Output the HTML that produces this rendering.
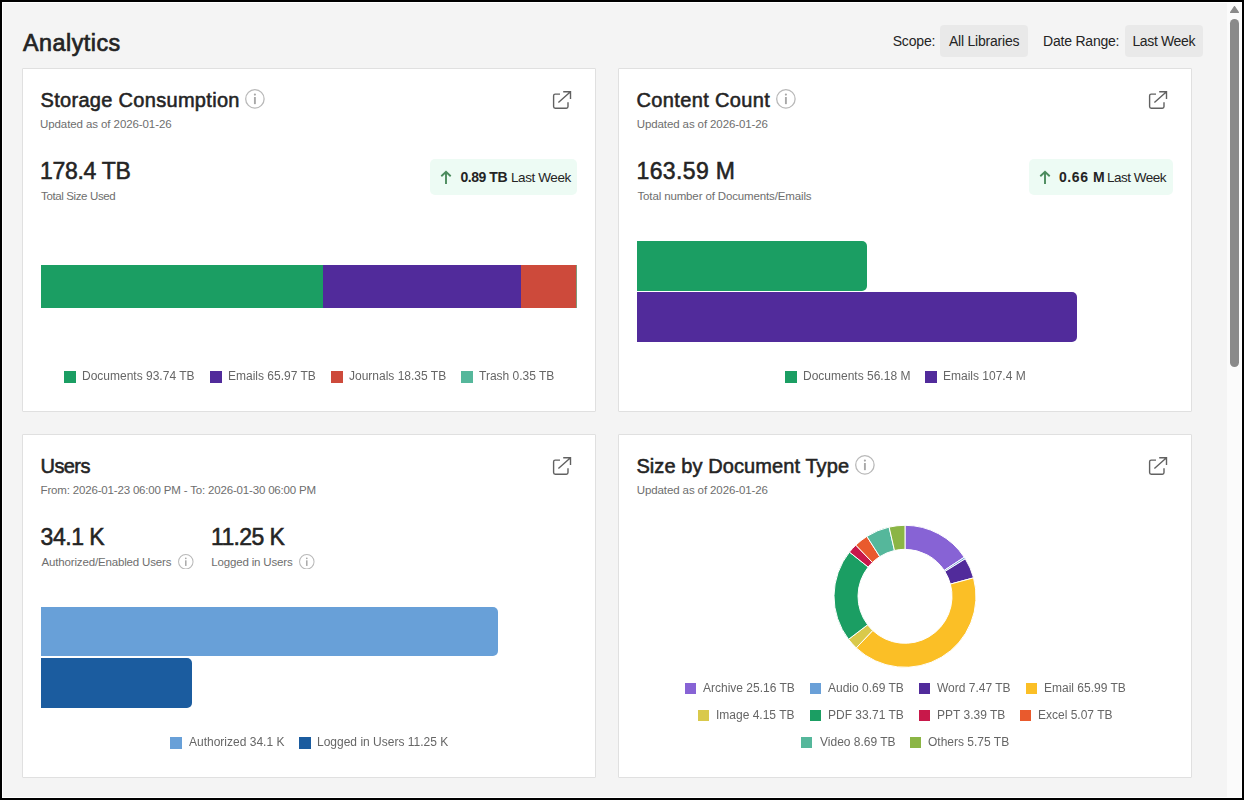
<!DOCTYPE html><html><head><meta charset="utf-8"><style>
html,body{margin:0;padding:0;}
body{width:1244px;height:800px;overflow:hidden;position:relative;background:#f4f4f4;font-family:"Liberation Sans",sans-serif;}
.t{position:absolute;line-height:1;white-space:nowrap;}
.r{position:absolute;}
.card{position:absolute;background:#fff;border:1px solid #e0e0e0;border-radius:1px;box-sizing:border-box;}
</style></head><body>
<div class="r" style="left:0;top:0;width:1244px;height:800px;box-sizing:border-box;border:2px solid #000;"></div>
<div class="r" style="left:2px;top:2px;width:1240px;height:796px;box-sizing:border-box;border:1px solid #fff;"></div>
<div class="r" style="left:1227px;top:3px;width:14px;height:794px;background:#fbfbfb;"></div>
<svg class="r" style="left:1227px;top:3px;width:14px;height:14px" viewBox="0 0 14 14"><path d="M3.6 9.4L7.5 3.6L11.4 9.4Z" fill="#8a8a8a" stroke="#8a8a8a" stroke-width="1.2" stroke-linejoin="round"/></svg>
<div class="r" style="left:1230px;top:19px;width:9px;height:348px;background:#8a8a8a;border-radius:4.5px;"></div>
<div class="t" style="left:23.00px;top:32.00px;font-size:23.3px;color:#242424;letter-spacing:0.5px;-webkit-text-stroke:0.7px #242424;">Analytics</div>
<div class="t" style="left:892.70px;top:34.00px;font-size:14px;color:#242424;letter-spacing:-0.16px;">Scope:</div>
<div class="r" style="left:940px;top:25px;width:88px;height:31.6px;background:#e9e9e9;border-radius:4px;"></div>
<div class="t" style="left:948.90px;top:34.00px;font-size:14px;color:#242424;letter-spacing:-0.208px;">All Libraries</div>
<div class="t" style="left:1043.00px;top:34.00px;font-size:14px;color:#242424;letter-spacing:-0.21px;">Date Range:</div>
<div class="r" style="left:1125px;top:25px;width:78px;height:31.6px;background:#e9e9e9;border-radius:4px;"></div>
<div class="t" style="left:1132.40px;top:34.00px;font-size:14px;color:#242424;letter-spacing:-0.35px;">Last Week</div>
<div class="card" style="left:22px;top:68px;width:574px;height:344px"></div>
<div class="card" style="left:618px;top:68px;width:574px;height:344px"></div>
<div class="card" style="left:22px;top:434px;width:574px;height:344px"></div>
<div class="card" style="left:618px;top:434px;width:574px;height:344px"></div>
<div class="t" style="left:40.50px;top:90.00px;font-size:20px;color:#242424;letter-spacing:0.306px;-webkit-text-stroke:0.55px #242424;">Storage Consumption</div>
<svg class="r" style="left:245.20px;top:89.10px;width:19.8px;height:19.8px" viewBox="0 0 20 20"><circle cx="10" cy="10" r="9.3" fill="none" stroke="#b9b9b9" stroke-width="1.3"/><rect x="9.05" y="8.1" width="1.9" height="7.2" fill="#a8a8a8"/><circle cx="10" cy="5.6" r="1.1" fill="#a8a8a8"/></svg>
<svg class="r" style="left:552px;top:90px;width:20px;height:20px" viewBox="0 0 20 20"><path d="M8 4.1H3.2Q1.6 4.1 1.6 5.7V16.6Q1.6 18.2 3.2 18.2H14.4Q16 18.2 16 16.6V12.2" fill="none" stroke="#616161" stroke-width="1.4" stroke-linecap="butt"/><path d="M11.2 1.7H18.5V8.9M18.5 1.7L6.4 12.6" fill="none" stroke="#616161" stroke-width="1.4"/></svg>
<div class="t" style="left:40.00px;top:119.00px;font-size:11.5px;color:#6e6e6e;letter-spacing:-0.087px;">Updated as of 2026-01-26</div>
<div class="t" style="left:40.00px;top:160.00px;font-size:23px;color:#242424;letter-spacing:-0.286px;-webkit-text-stroke:0.55px #242424;">178.4 TB</div>
<div class="t" style="left:41.00px;top:191.00px;font-size:11.5px;color:#6e6e6e;letter-spacing:-0.372px;">Total Size Used</div>
<div class="r" style="left:430px;top:159px;width:147px;height:36px;background:#edfbf4;border-radius:5px;"></div>
<svg class="r" style="left:439px;top:169px;width:14px;height:17px" viewBox="0 0 14 17"><path d="M7 3V15M2.3 7.3L7 2.8L11.7 7.3" fill="none" stroke="#4b8b5d" stroke-width="1.9"/></svg>
<div class="t" style="left:460.40px;top:170.00px;font-size:14px;font-weight:700;color:#242424;letter-spacing:-0.433px;">0.89 TB</div>
<div class="t" style="left:511.00px;top:171.00px;font-size:13.5px;color:#242424;letter-spacing:-0.4px;">Last Week</div>
<div class="r" style="left:41px;top:265px;width:282px;height:43px;background:#1b9e63;"></div>
<div class="r" style="left:323px;top:265px;width:198px;height:43px;background:#512b9b;"></div>
<div class="r" style="left:521px;top:265px;width:55px;height:43px;background:#cd4a3b;"></div>
<div class="r" style="left:576px;top:265px;width:1px;height:43px;background:#7f9a7a;"></div>
<div class="r" style="left:63.5px;top:371px;width:12.0px;height:12px;background:#1b9e63;"></div>
<div class="t" style="left:82.20px;top:370.04px;font-size:12px;color:#666666;will-change:transform;">Documents 93.74 TB</div>
<div class="r" style="left:209.5px;top:371px;width:12.0px;height:12px;background:#512b9b;"></div>
<div class="t" style="left:227.80px;top:370.04px;font-size:12px;color:#666666;will-change:transform;">Emails 65.97 TB</div>
<div class="r" style="left:330.5px;top:371px;width:12.0px;height:12px;background:#cd4a3b;"></div>
<div class="t" style="left:348.70px;top:370.04px;font-size:12px;color:#666666;will-change:transform;">Journals 18.35 TB</div>
<div class="r" style="left:461px;top:371px;width:12px;height:12px;background:#55b79b;"></div>
<div class="t" style="left:479.30px;top:370.04px;font-size:12px;color:#666666;will-change:transform;">Trash 0.35 TB</div>
<div class="t" style="left:636.50px;top:90.00px;font-size:20px;color:#242424;letter-spacing:0.358px;-webkit-text-stroke:0.55px #242424;">Content Count</div>
<svg class="r" style="left:776.20px;top:89.10px;width:19.8px;height:19.8px" viewBox="0 0 20 20"><circle cx="10" cy="10" r="9.3" fill="none" stroke="#b9b9b9" stroke-width="1.3"/><rect x="9.05" y="8.1" width="1.9" height="7.2" fill="#a8a8a8"/><circle cx="10" cy="5.6" r="1.1" fill="#a8a8a8"/></svg>
<svg class="r" style="left:1148px;top:90px;width:20px;height:20px" viewBox="0 0 20 20"><path d="M8 4.1H3.2Q1.6 4.1 1.6 5.7V16.6Q1.6 18.2 3.2 18.2H14.4Q16 18.2 16 16.6V12.2" fill="none" stroke="#616161" stroke-width="1.4" stroke-linecap="butt"/><path d="M11.2 1.7H18.5V8.9M18.5 1.7L6.4 12.6" fill="none" stroke="#616161" stroke-width="1.4"/></svg>
<div class="t" style="left:636.80px;top:119.00px;font-size:11.5px;color:#6e6e6e;letter-spacing:-0.109px;">Updated as of 2026-01-26</div>
<div class="t" style="left:636.50px;top:160.00px;font-size:23px;color:#242424;letter-spacing:0.372px;-webkit-text-stroke:0.55px #242424;">163.59 M</div>
<div class="t" style="left:637.50px;top:191.00px;font-size:11.5px;color:#6e6e6e;letter-spacing:-0.138px;">Total number of Documents/Emails</div>
<div class="r" style="left:1029px;top:159px;width:144px;height:36px;background:#edfbf4;border-radius:5px;"></div>
<svg class="r" style="left:1037.5px;top:169px;width:14px;height:17px" viewBox="0 0 14 17"><path d="M7 3V15M2.3 7.3L7 2.8L11.7 7.3" fill="none" stroke="#4b8b5d" stroke-width="1.9"/></svg>
<div class="t" style="left:1059.00px;top:170.00px;font-size:14px;font-weight:700;color:#242424;letter-spacing:0.56px;">0.66 M</div>
<div class="t" style="left:1107.00px;top:171.00px;font-size:13.5px;color:#242424;letter-spacing:-0.514px;">Last Week</div>
<div class="r" style="left:637px;top:241px;width:230px;height:49.5px;background:#1b9e63;border-radius:0 5px 5px 0;"></div>
<div class="r" style="left:637px;top:292.3px;width:440px;height:49.69999999999999px;background:#512b9b;border-radius:0 5px 5px 0;"></div>
<div class="r" style="left:784.6px;top:371px;width:12.0px;height:12px;background:#1b9e63;"></div>
<div class="t" style="left:803.00px;top:370.04px;font-size:12px;color:#666666;will-change:transform;">Documents 56.18 M</div>
<div class="r" style="left:924.8px;top:371px;width:12.0px;height:12px;background:#512b9b;"></div>
<div class="t" style="left:943.30px;top:370.04px;font-size:12px;color:#666666;will-change:transform;">Emails 107.4 M</div>
<div class="t" style="left:40.60px;top:456.00px;font-size:20px;color:#242424;letter-spacing:-0.6px;-webkit-text-stroke:0.55px #242424;">Users</div>
<svg class="r" style="left:552px;top:456px;width:20px;height:20px" viewBox="0 0 20 20"><path d="M8 4.1H3.2Q1.6 4.1 1.6 5.7V16.6Q1.6 18.2 3.2 18.2H14.4Q16 18.2 16 16.6V12.2" fill="none" stroke="#616161" stroke-width="1.4" stroke-linecap="butt"/><path d="M11.2 1.7H18.5V8.9M18.5 1.7L6.4 12.6" fill="none" stroke="#616161" stroke-width="1.4"/></svg>
<div class="t" style="left:40.60px;top:485.00px;font-size:11.5px;color:#6e6e6e;letter-spacing:-0.174px;">From: 2026-01-23 06:00 PM - To: 2026-01-30 06:00 PM</div>
<div class="t" style="left:40.60px;top:526.00px;font-size:23px;color:#242424;letter-spacing:-0.48px;-webkit-text-stroke:0.55px #242424;">34.1 K</div>
<div class="t" style="left:211.00px;top:526.00px;font-size:23px;color:#242424;letter-spacing:-0.633px;-webkit-text-stroke:0.55px #242424;">11.25 K</div>
<div class="t" style="left:41.60px;top:557.00px;font-size:11.5px;color:#6e6e6e;letter-spacing:-0.166px;">Authorized/Enabled Users</div>
<svg class="r" style="left:178.40px;top:553.70px;width:15.6px;height:15.6px" viewBox="0 0 20 20"><circle cx="10" cy="10" r="9.3" fill="none" stroke="#b9b9b9" stroke-width="1.3"/><rect x="9.05" y="8.1" width="1.9" height="7.2" fill="#a8a8a8"/><circle cx="10" cy="5.6" r="1.1" fill="#a8a8a8"/></svg>
<div class="t" style="left:211.20px;top:557.00px;font-size:11.5px;color:#6e6e6e;letter-spacing:-0.158px;">Logged in Users</div>
<svg class="r" style="left:299.20px;top:553.70px;width:15.6px;height:15.6px" viewBox="0 0 20 20"><circle cx="10" cy="10" r="9.3" fill="none" stroke="#b9b9b9" stroke-width="1.3"/><rect x="9.05" y="8.1" width="1.9" height="7.2" fill="#a8a8a8"/><circle cx="10" cy="5.6" r="1.1" fill="#a8a8a8"/></svg>
<div class="r" style="left:41px;top:607px;width:456.7px;height:49.200000000000045px;background:#68a0d8;border-radius:0 5px 5px 0;"></div>
<div class="r" style="left:41px;top:658.4px;width:150.8px;height:49.39999999999998px;background:#1b5c9f;border-radius:0 5px 5px 0;"></div>
<div class="r" style="left:170.1px;top:737px;width:12.0px;height:12px;background:#68a0d8;"></div>
<div class="t" style="left:188.50px;top:736.04px;font-size:12px;color:#666666;will-change:transform;">Authorized 34.1 K</div>
<div class="r" style="left:298.7px;top:737px;width:12.0px;height:12px;background:#1b5c9f;"></div>
<div class="t" style="left:316.70px;top:736.04px;font-size:12px;color:#666666;will-change:transform;">Logged in Users 11.25 K</div>
<div class="t" style="left:636.40px;top:456.00px;font-size:20px;color:#242424;letter-spacing:0.09px;-webkit-text-stroke:0.55px #242424;">Size by Document Type</div>
<svg class="r" style="left:855.40px;top:455.30px;width:19.8px;height:19.8px" viewBox="0 0 20 20"><circle cx="10" cy="10" r="9.3" fill="none" stroke="#b9b9b9" stroke-width="1.3"/><rect x="9.05" y="8.1" width="1.9" height="7.2" fill="#a8a8a8"/><circle cx="10" cy="5.6" r="1.1" fill="#a8a8a8"/></svg>
<svg class="r" style="left:1148px;top:456px;width:20px;height:20px" viewBox="0 0 20 20"><path d="M8 4.1H3.2Q1.6 4.1 1.6 5.7V16.6Q1.6 18.2 3.2 18.2H14.4Q16 18.2 16 16.6V12.2" fill="none" stroke="#616161" stroke-width="1.4" stroke-linecap="butt"/><path d="M11.2 1.7H18.5V8.9M18.5 1.7L6.4 12.6" fill="none" stroke="#616161" stroke-width="1.4"/></svg>
<div class="t" style="left:636.80px;top:485.00px;font-size:11.5px;color:#6e6e6e;letter-spacing:-0.109px;">Updated as of 2026-01-26</div>
<svg class="r" style="left:820px;top:515px;width:170px;height:165px" viewBox="0 0 170 165"><path d="M85.00 10.30A71 71 0 0 1 144.26 42.20L124.23 55.42A47 47 0 0 0 85.00 34.30Z" fill="#8763d5" stroke="#fff" stroke-width="1"/><path d="M144.26 42.20A71 71 0 0 1 145.30 43.82L124.92 56.49A47 47 0 0 0 124.23 55.42Z" fill="#6aa0d8" stroke="#fff" stroke-width="1"/><path d="M145.30 43.82A71 71 0 0 1 153.56 62.85L130.39 69.09A47 47 0 0 0 124.92 56.49Z" fill="#512b9b" stroke="#fff" stroke-width="1"/><path d="M153.56 62.85A71 71 0 0 1 36.26 132.93L52.74 115.48A47 47 0 0 0 130.39 69.09Z" fill="#fbbf26" stroke="#fff" stroke-width="1"/><path d="M36.26 132.93A71 71 0 0 1 28.53 124.34L47.62 109.79A47 47 0 0 0 52.74 115.48Z" fill="#d9c94b" stroke="#fff" stroke-width="1"/><path d="M28.53 124.34A71 71 0 0 1 29.43 37.10L48.22 52.04A47 47 0 0 0 47.62 109.79Z" fill="#1b9e63" stroke="#fff" stroke-width="1"/><path d="M29.43 37.10A71 71 0 0 1 35.79 30.12L52.42 47.42A47 47 0 0 0 48.22 52.04Z" fill="#c8184a" stroke="#fff" stroke-width="1"/><path d="M35.79 30.12A71 71 0 0 1 46.88 21.40L59.76 41.65A47 47 0 0 0 52.42 47.42Z" fill="#e95a2d" stroke="#fff" stroke-width="1"/><path d="M46.88 21.40A71 71 0 0 1 69.11 12.10L74.48 35.49A47 47 0 0 0 59.76 41.65Z" fill="#55b79b" stroke="#fff" stroke-width="1"/><path d="M69.11 12.10A71 71 0 0 1 85.00 10.30L85.00 34.30A47 47 0 0 0 74.48 35.49Z" fill="#8bb545" stroke="#fff" stroke-width="1"/></svg>
<div class="r" style="left:685px;top:683.2px;width:11px;height:11.0px;background:#8763d5;"></div>
<div class="t" style="left:703.20px;top:681.74px;font-size:12px;color:#666666;will-change:transform;">Archive 25.16 TB</div>
<div class="r" style="left:810px;top:683.2px;width:11px;height:11.0px;background:#6aa0d8;"></div>
<div class="t" style="left:827.80px;top:681.74px;font-size:12px;color:#666666;will-change:transform;">Audio 0.69 TB</div>
<div class="r" style="left:919px;top:683.2px;width:11px;height:11.0px;background:#512b9b;"></div>
<div class="t" style="left:936.70px;top:681.74px;font-size:12px;color:#666666;will-change:transform;">Word 7.47 TB</div>
<div class="r" style="left:1026px;top:683.2px;width:11px;height:11.0px;background:#fbbf26;"></div>
<div class="t" style="left:1043.70px;top:681.74px;font-size:12px;color:#666666;will-change:transform;">Email 65.99 TB</div>
<div class="r" style="left:698px;top:710.2px;width:11px;height:11.0px;background:#d9c94b;"></div>
<div class="t" style="left:715.50px;top:708.74px;font-size:12px;color:#666666;will-change:transform;">Image 4.15 TB</div>
<div class="r" style="left:809.5px;top:710.2px;width:11.0px;height:11.0px;background:#1b9e63;"></div>
<div class="t" style="left:827.80px;top:708.74px;font-size:12px;color:#666666;will-change:transform;">PDF 33.71 TB</div>
<div class="r" style="left:918.7px;top:710.2px;width:11.0px;height:11.0px;background:#c8184a;"></div>
<div class="t" style="left:936.70px;top:708.74px;font-size:12px;color:#666666;will-change:transform;">PPT 3.39 TB</div>
<div class="r" style="left:1020.2px;top:710.2px;width:11.0px;height:11.0px;background:#e95a2d;"></div>
<div class="t" style="left:1038.00px;top:708.74px;font-size:12px;color:#666666;will-change:transform;">Excel 5.07 TB</div>
<div class="r" style="left:801.2px;top:737.2px;width:11.0px;height:11.0px;background:#55b79b;"></div>
<div class="t" style="left:819.50px;top:735.74px;font-size:12px;color:#666666;will-change:transform;">Video 8.69 TB</div>
<div class="r" style="left:910px;top:737.2px;width:11px;height:11.0px;background:#8bb545;"></div>
<div class="t" style="left:928.40px;top:735.74px;font-size:12px;color:#666666;will-change:transform;">Others 5.75 TB</div>
</body></html>
